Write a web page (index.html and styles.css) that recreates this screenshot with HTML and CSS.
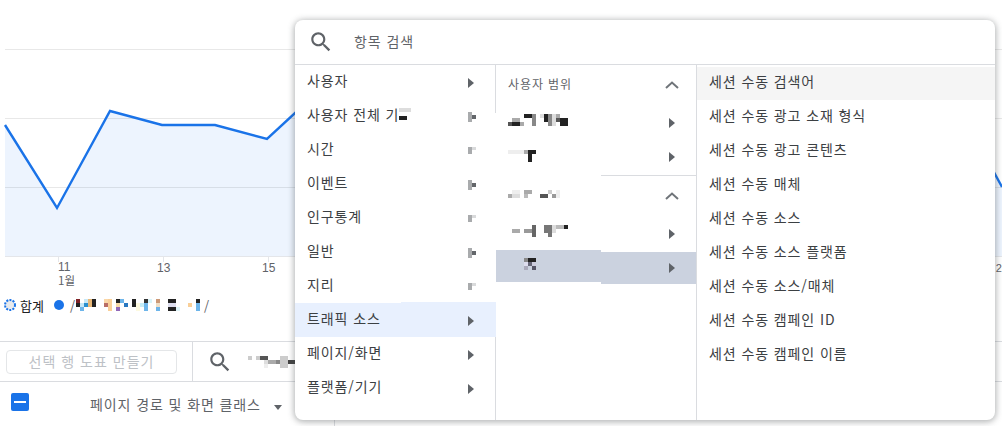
FILE: index.html
```html
<!DOCTYPE html>
<html lang="ko">
<head>
    <meta charset="UTF-8">
    <meta name="viewport" content="width=device-width, initial-scale=1.0">
    <title>Report</title>
    <link rel="stylesheet" href="styles.css">
</head>
<body>
    <svg class="defs" width="0" height="0">
        <symbol id="arrow" viewBox="0 0 8 10"><path d="M0 0l6 5-6 5z" fill="#5f6368"/></symbol>
        <symbol id="arrow-dark" viewBox="0 0 8 10" shape-rendering="crispEdges"><rect width="4" height="10" fill="#a9abad"/><rect x="4" y="3" width="4" height="4" fill="#63666a"/></symbol>
        <symbol id="arrow-light" viewBox="0 0 8 10" shape-rendering="crispEdges"><rect y="1" width="4" height="7" fill="#a9abad"/><rect x="4" y="1" width="4" height="3" fill="#d9dadb"/></symbol>
        <symbol id="chevron" viewBox="0 0 14 8"><path d="M1 7l6-5.5L13 7" fill="none" stroke="#70757a" stroke-width="2"/></symbol>
        <symbol id="search" viewBox="0 0 24 24"><path fill="#5f6368" d="M15.5 14h-.79l-.28-.27C15.41 12.59 16 11.11 16 9.5 16 5.91 13.09 3 9.5 3S3 5.91 3 9.5 5.91 16 9.5 16c1.61 0 3.09-.59 4.23-1.57l.27.28v.79l5 4.99L20.49 19l-4.99-5zm-6 0C7.01 14 5 11.99 5 9.5S7.01 5 9.5 5 14 7.01 14 9.5 11.99 14 9.5 14z"/></symbol>
    </svg>

    <div class="report">
        <!-- Line chart -->
        <svg class="chart" width="1002" height="290" viewBox="0 0 1002 290">
            <path class="area" d="M5 125L57 208 110 111 162 125 215 125 267 139 320 90V256H5zM960 110L1002 187V256H960z"/>
            <path class="grid" d="M5 49.5H1002M5 118.5H1002M5 187.5H1002"/>
            <path class="axis" d="M5 256.5H1002M58.5 257V262M163.5 257V262M268.5 257V262"/>
            <path class="line" d="M5 125L57 208 110 111 162 125 215 125 267 139 320 90M960 110L1002 187"/>
            <text x="58" y="271">11</text>
            <text class="month" x="58" y="285">1월</text>
            <text x="157" y="272">13</text>
            <text x="262" y="272">15</text>
            <text class="edge-tick" x="995.8" y="272">2</text>
        </svg>

        <div class="legend">
            <svg class="legend-total" width="12" height="12" viewBox="0 0 12 12"><circle cx="6" cy="6" r="5" fill="#e8eaed" stroke="#1a73e8" stroke-width="2" stroke-dasharray="2 1.2"/></svg>
            <span class="legend-name">합계</span>
            <span class="legend-dot"></span>
            <span class="legend-path">/</span>
            <svg class="mosaic legend-mosaic" width="128" height="12" viewBox="0 0 32 3" shape-rendering="crispEdges">
                <rect x="0" y="0" width="1" height="1" fill="#7f2428"/><rect x="0" y="1" width="1" height="1" fill="#222"/>
                <rect x="1" y="1" width="1" height="1" fill="#c7e8f7"/><rect x="1" y="2" width="1" height="1" fill="#6db5ea"/>
                <rect x="2" y="0" width="1" height="1" fill="#c7e8f7"/><rect x="2" y="1" width="1" height="1" fill="#2a90d0"/>
                <rect x="3" y="0" width="1" height="2" fill="#e8b878"/><rect x="4" y="0" width="1" height="2" fill="#222"/>
                <rect x="7" y="0" width="1" height="1" fill="#fad7a8"/><rect x="7" y="1" width="1" height="1" fill="#b96d66"/><rect x="8" y="0" width="1" height="3" fill="#f9cf98"/>
                <rect x="10" y="0" width="1" height="1" fill="#222"/><rect x="10" y="1" width="1" height="1" fill="#f6d9a8"/><rect x="10" y="2" width="1" height="1" fill="#9268b8"/>
                <rect x="11" y="0" width="1" height="1" fill="#6db5ea"/><rect x="12" y="1" width="1" height="1" fill="#2a78c0"/>
                <rect x="14" y="0" width="1" height="2" fill="#222"/><rect x="15" y="1" width="1" height="2" fill="#fdfae0"/>
                <rect x="16" y="1" width="1" height="1" fill="#c7eef8"/><rect x="17" y="0" width="1" height="1" fill="#333"/><rect x="17" y="1" width="1" height="2" fill="#6db5ea"/>
                <rect x="18" y="0" width="1" height="1" fill="#d8f4fa"/><rect x="20" y="0" width="1" height="1" fill="#cc9a78"/><rect x="20" y="1" width="1" height="1" fill="#f0e0c8"/><rect x="20" y="2" width="1" height="1" fill="#6db5ea"/>
                <rect x="23" y="0" width="2" height="1" fill="#222"/><rect x="23" y="1" width="2" height="1" fill="#dde"/><rect x="23" y="2" width="2" height="1" fill="#222"/>
                <rect x="25" y="2" width="1" height="1" fill="#dff4f8"/><rect x="28" y="1" width="1" height="1" fill="#f9cf98"/>
                <rect x="30" y="0" width="1" height="1" fill="#222"/><rect x="30" y="1" width="1" height="2" fill="#6db5ea"/>
            </svg>
            <span class="legend-path">/</span>
        </div>

        <div class="toolbar">
            <div class="toolbar-left">
                <button class="make-chart" disabled>선택 행 도표 만들기</button>
            </div>
            <div class="toolbar-search">
                <svg width="26" height="26"><use href="#search"/></svg>
                <svg class="mosaic" width="48" height="12" viewBox="0 0 12 3" shape-rendering="crispEdges">
                    <rect x="0" y="0" width="1" height="1" fill="#ccc"/><rect x="2" y="0" width="1" height="1" fill="#ccc"/><rect x="3" y="0" width="2" height="1" fill="#555"/>
                    <rect x="4" y="1" width="1" height="1" fill="#ddd"/><rect x="4" y="2" width="1" height="1" fill="#eee"/><rect x="5" y="1" width="2" height="1" fill="#aaa"/>
                    <rect x="7" y="1" width="1" height="1" fill="#888"/><rect x="8" y="0" width="2" height="3" fill="#ccc"/><rect x="10" y="1" width="2" height="1" fill="#444"/>
                </svg>
            </div>
        </div>

        <div class="table-head">
            <div class="head-cell">
                <span class="check"></span>
                <span class="head-label">페이지 경로 및 화면 클래스</span>
                <span class="sort-arrow"></span>
            </div>
        </div>
    </div>

    <!-- Dimension picker -->
    <div class="picker">
        <div class="picker-search">
            <svg width="26" height="26"><use href="#search"/></svg>
            <span>항목 검색</span>
        </div>
        <div class="picker-cols">
            <ul class="col col-main">
                <li>사용자<svg class="arr"><use href="#arrow"/></svg></li>
                <li><span class="cut">사용자 전체 기<svg class="mosaic" width="12" height="12" viewBox="0 0 3 3" shape-rendering="crispEdges"><rect x="0" y="0" width="3" height="1" fill="#ddd"/><rect x="0" y="2" width="2" height="1" fill="#222"/></svg></span><svg class="arr"><use href="#arrow-dark"/></svg></li>
                <li>시간<svg class="arr"><use href="#arrow-light"/></svg></li>
                <li>이벤트<svg class="arr"><use href="#arrow-dark"/></svg></li>
                <li>인구통계<svg class="arr"><use href="#arrow-light"/></svg></li>
                <li>일반<svg class="arr"><use href="#arrow-dark"/></svg></li>
                <li>지리<svg class="arr"><use href="#arrow-light"/></svg></li>
                <li class="active">트래픽 소스<svg class="arr"><use href="#arrow"/></svg></li>
                <li>페이지/화면<svg class="arr"><use href="#arrow"/></svg></li>
                <li>플랫폼/기기<svg class="arr"><use href="#arrow"/></svg></li>
            </ul>
            <div class="col col-sub">
                <div class="sub-head"><span>사용자 범위</span><svg class="chev"><use href="#chevron"/></svg></div>
                <div class="sub-row">
                    <svg class="mosaic mosaic-up" width="60" height="12" viewBox="0 0 15 3" shape-rendering="crispEdges">
                        <rect x="0" y="2" width="1" height="1" fill="#555"/><rect x="1" y="1" width="2" height="1" fill="#aaa"/><rect x="1" y="2" width="2" height="1" fill="#222"/><rect x="3" y="2" width="1" height="1" fill="#aaa"/>
                        <rect x="4" y="0" width="2" height="1" fill="#222"/><rect x="6" y="0" width="1" height="3" fill="#888"/><rect x="8" y="0" width="1" height="1" fill="#ddd"/><rect x="9" y="0" width="1" height="2" fill="#222"/>
                        <rect x="10" y="0" width="1" height="3" fill="#888"/><rect x="11" y="0" width="1" height="3" fill="#ddd"/><rect x="12" y="0" width="1" height="1" fill="#aaa"/><rect x="12" y="1" width="1" height="1" fill="#555"/><rect x="13" y="1" width="2" height="2" fill="#222"/>
                    </svg>
                    <svg class="arr"><use href="#arrow"/></svg>
                </div>
                <div class="sub-row">
                    <svg class="mosaic" width="60" height="12" viewBox="0 0 15 3" shape-rendering="crispEdges">
                        <rect x="0" y="0" width="4" height="1" fill="#eee"/><rect x="4" y="0" width="1" height="1" fill="#aaa"/><rect x="5" y="0" width="2" height="1" fill="#222"/><rect x="5" y="1" width="1" height="2" fill="#222"/>
                    </svg>
                    <svg class="arr"><use href="#arrow"/></svg>
                </div>
                <div class="sub-line"></div>
                <div class="sub-head">
                    <svg class="mosaic mosaic-up" width="60" height="8" viewBox="0 0 15 2" shape-rendering="crispEdges">
                        <rect x="0" y="1" width="1" height="1" fill="#aaa"/><rect x="1" y="0" width="2" height="1" fill="#eee"/><rect x="1" y="1" width="2" height="1" fill="#ddd"/><rect x="4" y="0" width="2" height="1" fill="#aaa"/><rect x="4" y="1" width="1" height="1" fill="#bbb"/>
                        <rect x="8" y="1" width="2" height="1" fill="#555"/><rect x="10" y="0" width="1" height="1" fill="#ccc"/><rect x="11" y="1" width="1" height="1" fill="#999"/><rect x="12" y="0" width="1" height="2" fill="#eee"/>
                    </svg>
                    <svg class="chev"><use href="#chevron"/></svg>
                </div>
                <div class="sub-row">
                    <svg class="mosaic mosaic-up" width="60" height="12" viewBox="0 0 15 3" shape-rendering="crispEdges">
                        <rect x="1" y="1" width="2" height="1" fill="#aaa"/><rect x="4" y="1" width="2" height="1" fill="#999"/><rect x="6" y="0" width="1" height="3" fill="#666"/><rect x="9" y="0" width="2" height="2" fill="#777"/><rect x="10" y="2" width="1" height="1" fill="#777"/>
                        <rect x="11" y="0" width="1" height="2" fill="#ddd"/><rect x="12" y="0" width="2" height="1" fill="#bbb"/><rect x="14" y="0" width="1" height="1" fill="#222"/>
                    </svg>
                    <svg class="arr"><use href="#arrow"/></svg>
                </div>
                <div class="sub-row selected">
                    <svg class="mosaic sel-mosaic" width="12" height="12" viewBox="0 0 3 3" shape-rendering="crispEdges">
                        <rect x="0" y="0" width="1" height="1" fill="#888"/><rect x="1" y="0" width="2" height="1" fill="#222"/><rect x="0" y="1" width="1" height="1" fill="#dde"/><rect x="1" y="1" width="1" height="1" fill="#667"/><rect x="2" y="1" width="1" height="1" fill="#ccd"/><rect x="0" y="2" width="1" height="1" fill="#aab"/><rect x="2" y="2" width="1" height="1" fill="#556"/>
                    </svg>
                    <svg class="arr"><use href="#arrow"/></svg>
                </div>
            </div>
            <ul class="col col-list">
                <li class="hover">세션 수동 검색어</li>
                <li>세션 수동 광고 소재 형식</li>
                <li>세션 수동 광고 콘텐츠</li>
                <li>세션 수동 매체</li>
                <li>세션 수동 소스</li>
                <li>세션 수동 소스 플랫폼</li>
                <li>세션 수동 소스/매체</li>
                <li>세션 수동 캠페인 ID</li>
                <li>세션 수동 캠페인 이름</li>
            </ul>
        </div>
    </div>
</body>
</html>
```
FILE: styles.css
```css
body {
    margin: 0;
    width: 1002px;
    height: 426px;
    overflow: hidden;
    background: #fff;
    font-family: "Noto Sans CJK KR", "Noto Sans", sans-serif;
    font-size: 14px;
    color: #3c4043;
}
ul {
    margin: 0;
    padding: 0;
    list-style: none;
}
.defs {
    position: absolute;
}
.mosaic {
    display: block;
    flex: none;
}
.mosaic-up {
    margin-top: -4px;
}

/* Chart */
.chart {
    display: block;
}
.chart text {
    font-family: "Liberation Sans", "Noto Sans CJK KR", sans-serif;
    font-size: 12px;
    fill: #5f6368;
}
.chart .month {
    font-family: "Noto Sans CJK KR", sans-serif;
    font-size: 11.5px;
}
.chart .edge-tick {
    font-size: 11px;
}
.area {
    fill: #edf4fe;
}
.grid {
    fill: none;
    stroke: #000;
    stroke-opacity: 0.09;
}
.axis {
    fill: none;
    stroke: #e4e6ea;
}
.line {
    fill: none;
    stroke: #1a73e8;
    stroke-width: 2.4;
}

/* Legend */
.legend {
    height: 51px;
    box-sizing: border-box;
    display: flex;
    align-items: center;
    padding: 0 0 21px 4px;
    font-size: 13px;
    color: #202124;
}
.legend-name {
    margin-left: 4px;
}
.legend-dot {
    width: 10px;
    height: 10px;
    margin-left: 10px;
    border-radius: 50%;
    background: #1a73e8;
}
.legend-path {
    margin-left: 6px;
    color: #5f6368;
}
.legend-mosaic {
    margin-left: 1px;
}
.legend-mosaic + .legend-path {
    margin-left: 0;
}

/* Toolbar and table head */
.toolbar {
    height: 41px;
    box-sizing: border-box;
    display: flex;
    border-top: 1px solid #dadce0;
    border-bottom: 1px solid #dadce0;
}
.toolbar-left {
    width: 193px;
    box-sizing: border-box;
    padding: 8px 0 0 6px;
    border-right: 1px solid #dadce0;
}
.make-chart {
    display: block;
    width: 171px;
    height: 24px;
    padding: 0 0 2px;
    border: 1px solid #e4e6e8;
    border-radius: 4px;
    background: #fff;
    font: inherit;
    letter-spacing: 1px;
    color: #bdc1c6;
}
.toolbar-search {
    display: flex;
    align-items: center;
    gap: 15px;
    padding-left: 14px;
}
.table-head {
    height: 45px;
}
.head-cell {
    width: 335px;
    height: 100%;
    box-sizing: border-box;
    display: flex;
    align-items: flex-start;
    padding: 11px 0 0 11px;
    border-right: 1px solid #dadce0;
}
.check {
    position: relative;
    width: 18px;
    height: 18px;
    border-radius: 2px;
    background: #1a73e8;
}
.check::after {
    content: "";
    position: absolute;
    left: 3px;
    top: 8px;
    width: 12px;
    height: 2px;
    background: #fff;
}
.head-label {
    margin: 1px 0 0 61px;
    letter-spacing: 0.9px;
    color: #5f6368;
}
.sort-arrow {
    margin: 12px 0 0 13px;
    border: 4px solid transparent;
    border-top: 5px solid #5f6368;
    border-bottom: 0;
}

/* Picker */
.picker {
    position: absolute;
    left: 295px;
    top: 20px;
    width: 700px;
    height: 400px;
    border-radius: 8px;
    background: #fff;
    box-shadow: 0 1px 6px 1px rgba(60, 64, 67, 0.4);
    overflow: hidden;
}
.picker-search {
    height: 45px;
    box-sizing: border-box;
    display: flex;
    align-items: center;
    padding: 0 0 0 13px;
    border-bottom: 1px solid #dadce0;
    letter-spacing: 0.9px;
    color: #5f6368;
}
.picker-search span {
    margin: -3px 0 0 20px;
}
.picker-cols {
    display: flex;
    height: 355px;
}
.col-main {
    width: 201px;
    background: linear-gradient(#dadce0 48px, transparent 48px, transparent 248px, #dadce0 248px) right / 1px 100% no-repeat;
}
.col-main li {
    height: 34px;
    display: flex;
    align-items: center;
    justify-content: space-between;
    padding: 0 20px 4px 12px;
    box-sizing: border-box;
    letter-spacing: 0.9px;
}
.col-main .arr {
    margin-top: 6px;
}
.col-main .active {
    position: relative;
    background: #e8f0fe;
}
.col-main .active::after {
    content: "";
    position: absolute;
    left: 106px;
    right: 0;
    top: -1px;
    height: 1px;
    background: #e8f0fe;
}
.cut {
    display: flex;
    align-items: center;
}
.arr {
    flex: none;
    width: 8px;
    height: 10px;
}
.col-sub {
    width: 200px;
    border-right: 1px solid #dadce0;
}
.sub-head {
    height: 40px;
    display: flex;
    align-items: center;
    justify-content: space-between;
    padding: 0 17px 0 12px;
    font-size: 12px;
    letter-spacing: 0.9px;
    color: #5f6368;
}
.sub-head span {
    margin-top: -4px;
}
.chev {
    width: 14px;
    height: 8px;
}
.sub-row {
    position: relative;
    height: 34px;
    display: flex;
    align-items: center;
    justify-content: space-between;
    padding: 0 19px 0 12px;
}
.sub-row .arr {
    margin-top: 2px;
}
.sub-line {
    height: 1px;
    margin: 2px 0 0 105px;
    background: #dadce0;
}
.selected::before {
    content: "";
    position: absolute;
    left: 0;
    top: 0;
    width: 105px;
    height: 32px;
    background: #cbd2df;
}
.selected::after {
    content: "";
    position: absolute;
    left: 105px;
    right: 0;
    top: 2px;
    bottom: 0;
    background: #cbd2df;
}
.selected .arr,
.sel-mosaic {
    position: relative;
    z-index: 1;
}
.sel-mosaic {
    margin: -6px 0 0 16px;
}
.col-list {
    flex: 1;
    padding-top: 2px;
}
.col-list li {
    height: 33px;
    margin-bottom: 1px;
    box-sizing: border-box;
    display: flex;
    align-items: center;
    padding: 0 0 5px 12px;
    letter-spacing: 0.9px;
}
.col-list .hover {
    background: #f5f5f5;
}
```
